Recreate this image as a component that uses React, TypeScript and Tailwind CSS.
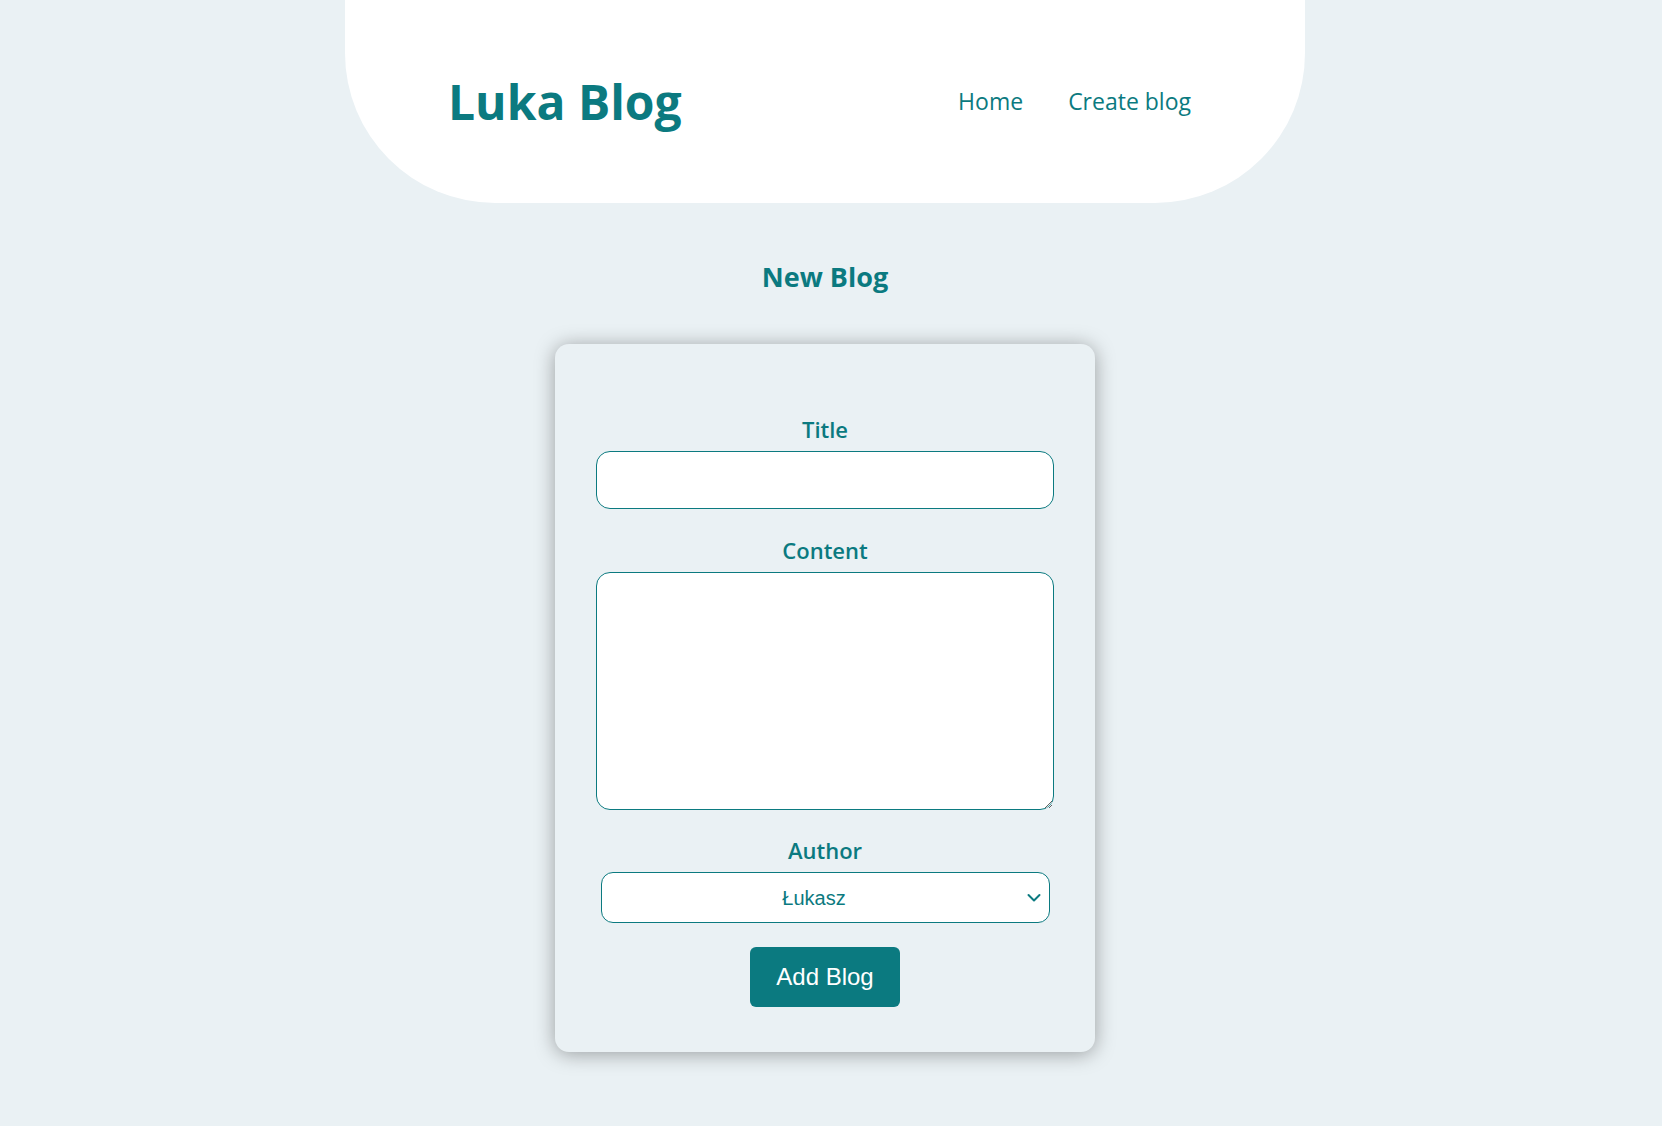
import { useState } from "react";

const authors = ["Łukasz", "Kasia", "Marek"];

function Navbar() {
  return (
    <nav className="mx-auto flex h-[203px] w-[960px] items-center justify-between rounded-b-[150px] bg-white pl-[103px] pr-[114px]">
      <h1 className="text-[48px] font-bold leading-none text-[#0b7a80]">Luka Blog</h1>
      <div className="flex items-center gap-[45px] text-[23px] leading-none text-[#0b7a80]">
        <a href="#">Home</a>
        <a href="#">Create blog</a>
      </div>
    </nav>
  );
}

function Field({ label, children }: { label: string; children: React.ReactNode }) {
  return (
    <label className="flex flex-col items-center">
      <span className="mb-[7px] block text-[22px] font-semibold leading-[30px] text-[#0b7a80]">
        {label}
      </span>
      {children}
    </label>
  );
}

function CreateForm() {
  const [title, setTitle] = useState("");
  const [body, setBody] = useState("");
  const [author, setAuthor] = useState(authors[0]);

  return (
    <form
      onSubmit={(e) => e.preventDefault()}
      className="mx-auto flex w-[540px] flex-col rounded-[14px] bg-[#eaf1f4] px-10 pb-[45px] pt-[70px] shadow-[0_2px_20px_rgba(0,0,0,0.35)]"
    >
      <Field label="Title">
        <input
          type="text"
          value={title}
          onChange={(e) => setTitle(e.target.value)}
          className="h-[58px] w-[458px] rounded-[14px] border border-[#0b7a80] bg-white px-3 text-[20px] text-[#0b7a80] outline-none"
        />
      </Field>

      <div className="mt-[26px]">
        <Field label="Content">
          <textarea
            value={body}
            onChange={(e) => setBody(e.target.value)}
            className="h-[238px] w-[458px] rounded-[14px] border border-[#0b7a80] bg-white px-3 py-2 text-[20px] text-[#0b7a80] outline-none"
          />
        </Field>
      </div>

      <div className="mt-[25px]">
        <Field label="Author">
          <div className="relative w-[449px]">
            <select
              value={author}
              onChange={(e) => setAuthor(e.target.value)}
              className="h-[51px] w-full appearance-none rounded-[12px] border border-[#0b7a80] bg-white pr-[22px] text-center font-['Liberation_Sans',Arial,sans-serif] text-[20px] text-[#0b7a80] outline-none [text-align-last:center]"
            >
              {authors.map((a) => (
                <option key={a} value={a}>
                  {a}
                </option>
              ))}
            </select>
            <svg
              className="pointer-events-none absolute right-[9px] top-1/2 -translate-y-1/2"
              width="14"
              height="9"
              viewBox="0 0 14 9"
              fill="none"
            >
              <path d="M1.5 1.5 7 7l5.5-5.5" stroke="#0b7a80" strokeWidth="2" strokeLinecap="round" strokeLinejoin="round" />
            </svg>
          </div>
        </Field>
      </div>

      <button
        type="submit"
        className="mx-auto mt-[24px] h-[60px] w-[150px] rounded-[6px] bg-[#0b7a80] font-['Liberation_Sans',Arial,sans-serif] text-[24px] text-white"
      >
        Add Blog
      </button>
    </form>
  );
}

export default function App() {
  return (
    <div className="min-h-screen bg-[#eaf1f4] pb-[73px] pr-[12px] font-['Open_Sans','Noto_Sans',sans-serif]">
      <Navbar />
      <h2 className="mb-[54px] mt-[60px] text-center text-[27px] font-bold leading-none text-[#0b7a80]">
        New Blog
      </h2>
      <CreateForm />
    </div>
  );
}
